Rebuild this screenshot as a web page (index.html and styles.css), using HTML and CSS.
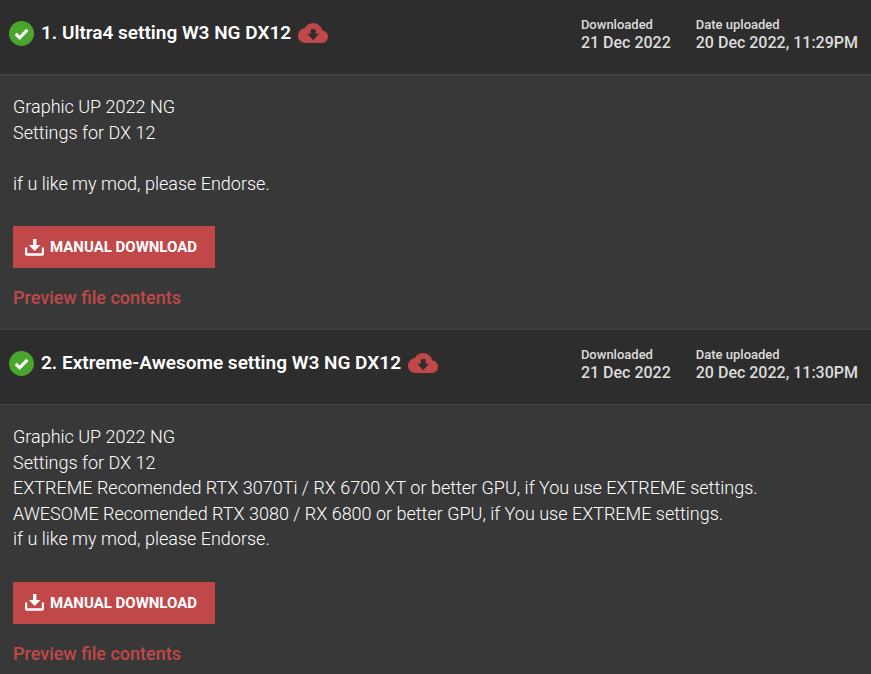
FILE: index.html
```html
<!DOCTYPE html>
<html lang="en">
<head>
<meta charset="utf-8">
<meta name="viewport" content="width=device-width, initial-scale=1">
<title>Mod files</title>
<link rel="stylesheet" href="styles.css">
</head>
<body>
<svg class="sprite" aria-hidden="true">
  <symbol id="check" viewBox="0 0 25 25">
    <circle cx="12.5" cy="12.5" r="12.5" fill="#4aa52c"/>
    <path d="M6.8 12.8l3.9 4 7.6-7.9" fill="none" stroke="#fff" stroke-width="3.2"/>
  </symbol>
  <symbol id="cloud" viewBox="0 0 30 20">
    <path fill="currentColor" fill-rule="evenodd" d="M24.2 7.6C23.4 3.2 19.6 0 15 0 11.300 0 8.100 2.100 6.700 5.200 2.900 5.600 0 8.800 0 12.600 0 16.700 3.300 20 7.400 20H23.800C27.200 20 30 17.200 30 13.800 30 10.500 27.400 7.800 24.200 7.600ZM12.700 6.200H17.600V10.800H21L15.200 17.200 9.300 10.800H12.700Z"/>
  </symbol>
  <symbol id="tray" viewBox="0 0 19 17">
    <path fill="currentColor" d="M8 0h3.400v6h4.100L9.700 12 3.800 6H8ZM0 8.500h2.200v5.700h14.600V8.500H19V15q0 1.700-1.700 1.700H1.700Q0 16.700 0 15Z"/>
  </symbol>
</svg>
<main class="files">
  <article class="file">
    <header class="file-header">
      <h2 class="title">
        <svg class="check"><use href="#check"/></svg>
        <span>1. Ultra4 setting W3 NG DX12</span>
        <svg class="cloud"><use href="#cloud"/></svg>
      </h2>
      <dl class="stats">
        <div><dt>Downloaded</dt><dd>21 Dec 2022</dd></div>
        <div><dt>Date uploaded</dt><dd>20 Dec 2022, 11:29PM</dd></div>
      </dl>
    </header>
    <div class="file-body">
      <p class="description">Graphic UP 2022 NG<br>Settings for DX 12<br><br>if u like my mod, please Endorse.</p>
      <button class="download" type="button"><svg class="tray"><use href="#tray"/></svg>Manual download</button>
      <a class="preview" href="#">Preview file contents</a>
    </div>
  </article>
  <article class="file">
    <header class="file-header">
      <h2 class="title">
        <svg class="check"><use href="#check"/></svg>
        <span>2. Extreme-Awesome setting W3 NG DX12</span>
        <svg class="cloud"><use href="#cloud"/></svg>
      </h2>
      <dl class="stats">
        <div><dt>Downloaded</dt><dd>21 Dec 2022</dd></div>
        <div><dt>Date uploaded</dt><dd>20 Dec 2022, 11:30PM</dd></div>
      </dl>
    </header>
    <div class="file-body">
      <p class="description">Graphic UP 2022 NG<br>Settings for DX 12<br>EXTREME Recomended RTX 3070Ti / RX 6700 XT or better GPU, if You use EXTREME settings.<br>AWESOME Recomended RTX 3080 / RX 6800 or better GPU, if You use EXTREME settings.<br>if u like my mod, please Endorse.</p>
      <button class="download" type="button"><svg class="tray"><use href="#tray"/></svg>Manual download</button>
      <a class="preview" href="#">Preview file contents</a>
    </div>
  </article>
</main>
</body>
</html>
```
FILE: styles.css
```css
* {
  box-sizing: border-box;
}

body {
  margin: 0;
  background: #383838;
  color: #fff;
  font-family: Roboto, "Liberation Sans", sans-serif;
}

.sprite {
  position: absolute;
  width: 0;
  height: 0;
}

.file-header {
  display: flex;
  justify-content: space-between;
  align-items: flex-start;
  padding: 16px 13px 22px 9px;
  background: #2d2d2d;
  border-bottom: 1px solid #444;
}

.file + .file .file-header {
  border-top: 1px solid #444;
}

.title {
  display: flex;
  align-items: center;
  gap: 7px;
  margin: 0;
  padding-top: 4px;
  font-size: 19px;
  font-weight: 600;
  line-height: 26px;
}

.check {
  width: 25px;
  height: 25px;
}

.cloud {
  width: 30px;
  height: 20px;
  color: #c04848;
}

.stats {
  display: flex;
  gap: 25px;
  margin: 0;
  color: #ddd;
  font-weight: 500;
  line-height: 18px;
}

.stats dt {
  font-size: 13px;
}

.stats dd {
  margin: 0;
  font-size: 16px;
}

.file-body {
  display: flex;
  flex-direction: column;
  align-items: flex-start;
  padding: 19px 13px 18px;
}

.description {
  margin: 0 0 30px;
  font-size: 18px;
  font-weight: 350;
  line-height: 1.42;
}

.download {
  display: flex;
  align-items: center;
  gap: 6px;
  height: 42px;
  margin: 0 0 17px;
  padding: 0 18px 0 12px;
  border: 0;
  background: #c04848;
  color: #fff;
  font: 700 15px/20px Roboto, "Liberation Sans", sans-serif;
  text-transform: uppercase;
}

.tray {
  width: 19px;
  height: 17px;
}

.preview {
  color: #c04848;
  font-size: 18px;
  font-weight: 500;
  line-height: 26px;
  text-decoration: none;
}
```
